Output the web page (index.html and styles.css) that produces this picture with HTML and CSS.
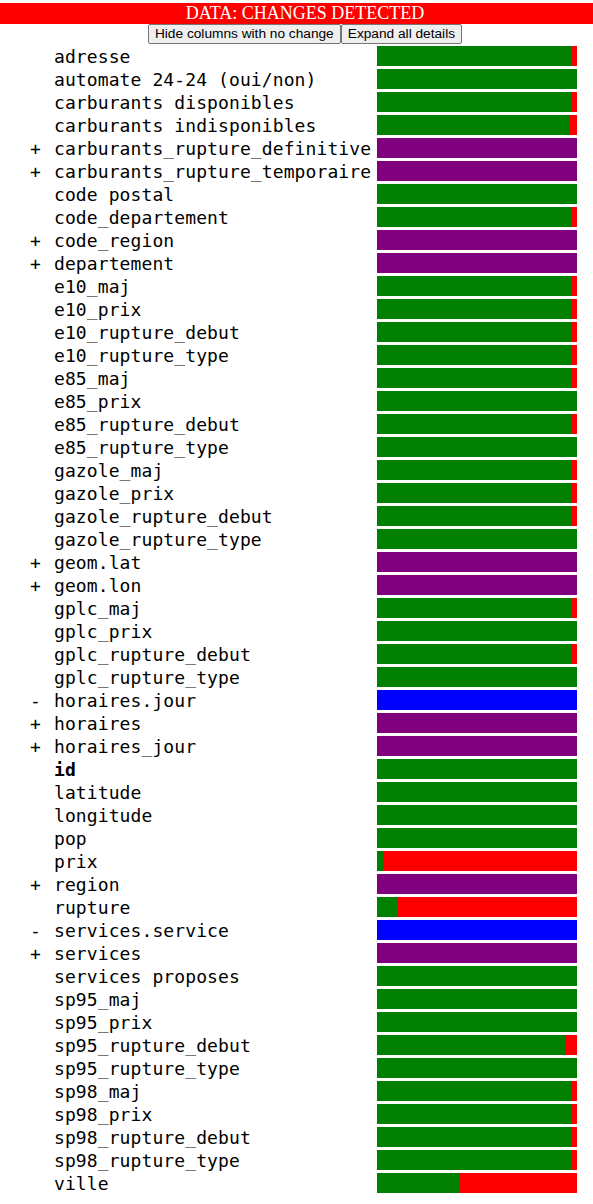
FILE: index.html
```html
<!DOCTYPE html>
<html>
<head>
<meta charset="utf-8">
<link rel="stylesheet" href="styles.css">
</head>
<body>
<div class="banner"><div class="banner-text">DATA: CHANGES DETECTED</div></div>
<div class="toolbar"><button class="btn">Hide columns with no change</button><button class="btn">Expand all details</button></div>
<div class="cols">
  <div class="row"><span class="mark"></span><span class="name">adresse</span><div class="bar"><i class="seg ok" style="width:195px"></i><i class="seg chg"></i></div></div>
  <div class="row"><span class="mark"></span><span class="name">automate 24-24 (oui/non)</span><div class="bar"><i class="seg ok fill"></i></div></div>
  <div class="row"><span class="mark"></span><span class="name">carburants disponibles</span><div class="bar"><i class="seg ok" style="width:195px"></i><i class="seg chg"></i></div></div>
  <div class="row"><span class="mark"></span><span class="name">carburants indisponibles</span><div class="bar"><i class="seg ok" style="width:192px"></i><i class="seg chg"></i></div></div>
  <div class="row"><span class="mark">+</span><span class="name">carburants_rupture_definitive</span><div class="bar"><i class="seg added fill"></i></div></div>
  <div class="row"><span class="mark">+</span><span class="name">carburants_rupture_temporaire</span><div class="bar"><i class="seg added fill"></i></div></div>
  <div class="row"><span class="mark"></span><span class="name">code postal</span><div class="bar"><i class="seg ok fill"></i></div></div>
  <div class="row"><span class="mark"></span><span class="name">code_departement</span><div class="bar"><i class="seg ok" style="width:195px"></i><i class="seg chg"></i></div></div>
  <div class="row"><span class="mark">+</span><span class="name">code_region</span><div class="bar"><i class="seg added fill"></i></div></div>
  <div class="row"><span class="mark">+</span><span class="name">departement</span><div class="bar"><i class="seg added fill"></i></div></div>
  <div class="row"><span class="mark"></span><span class="name">e10_maj</span><div class="bar"><i class="seg ok" style="width:195px"></i><i class="seg chg"></i></div></div>
  <div class="row"><span class="mark"></span><span class="name">e10_prix</span><div class="bar"><i class="seg ok" style="width:195px"></i><i class="seg chg"></i></div></div>
  <div class="row"><span class="mark"></span><span class="name">e10_rupture_debut</span><div class="bar"><i class="seg ok" style="width:195px"></i><i class="seg chg"></i></div></div>
  <div class="row"><span class="mark"></span><span class="name">e10_rupture_type</span><div class="bar"><i class="seg ok" style="width:195px"></i><i class="seg chg"></i></div></div>
  <div class="row"><span class="mark"></span><span class="name">e85_maj</span><div class="bar"><i class="seg ok" style="width:195px"></i><i class="seg chg"></i></div></div>
  <div class="row"><span class="mark"></span><span class="name">e85_prix</span><div class="bar"><i class="seg ok fill"></i></div></div>
  <div class="row"><span class="mark"></span><span class="name">e85_rupture_debut</span><div class="bar"><i class="seg ok" style="width:195px"></i><i class="seg chg"></i></div></div>
  <div class="row"><span class="mark"></span><span class="name">e85_rupture_type</span><div class="bar"><i class="seg ok fill"></i></div></div>
  <div class="row"><span class="mark"></span><span class="name">gazole_maj</span><div class="bar"><i class="seg ok" style="width:195px"></i><i class="seg chg"></i></div></div>
  <div class="row"><span class="mark"></span><span class="name">gazole_prix</span><div class="bar"><i class="seg ok" style="width:195px"></i><i class="seg chg"></i></div></div>
  <div class="row"><span class="mark"></span><span class="name">gazole_rupture_debut</span><div class="bar"><i class="seg ok" style="width:195px"></i><i class="seg chg"></i></div></div>
  <div class="row"><span class="mark"></span><span class="name">gazole_rupture_type</span><div class="bar"><i class="seg ok fill"></i></div></div>
  <div class="row"><span class="mark">+</span><span class="name">geom.lat</span><div class="bar"><i class="seg added fill"></i></div></div>
  <div class="row"><span class="mark">+</span><span class="name">geom.lon</span><div class="bar"><i class="seg added fill"></i></div></div>
  <div class="row"><span class="mark"></span><span class="name">gplc_maj</span><div class="bar"><i class="seg ok" style="width:195px"></i><i class="seg chg"></i></div></div>
  <div class="row"><span class="mark"></span><span class="name">gplc_prix</span><div class="bar"><i class="seg ok fill"></i></div></div>
  <div class="row"><span class="mark"></span><span class="name">gplc_rupture_debut</span><div class="bar"><i class="seg ok" style="width:195px"></i><i class="seg chg"></i></div></div>
  <div class="row"><span class="mark"></span><span class="name">gplc_rupture_type</span><div class="bar"><i class="seg ok fill"></i></div></div>
  <div class="row"><span class="mark">-</span><span class="name">horaires.jour</span><div class="bar"><i class="seg removed fill"></i></div></div>
  <div class="row"><span class="mark">+</span><span class="name">horaires</span><div class="bar"><i class="seg added fill"></i></div></div>
  <div class="row"><span class="mark">+</span><span class="name">horaires_jour</span><div class="bar"><i class="seg added fill"></i></div></div>
  <div class="row"><span class="mark"></span><span class="name key">id</span><div class="bar"><i class="seg ok fill"></i></div></div>
  <div class="row"><span class="mark"></span><span class="name">latitude</span><div class="bar"><i class="seg ok fill"></i></div></div>
  <div class="row"><span class="mark"></span><span class="name">longitude</span><div class="bar"><i class="seg ok fill"></i></div></div>
  <div class="row"><span class="mark"></span><span class="name">pop</span><div class="bar"><i class="seg ok fill"></i></div></div>
  <div class="row"><span class="mark"></span><span class="name">prix</span><div class="bar"><i class="seg ok" style="width:7px"></i><i class="seg chg"></i></div></div>
  <div class="row"><span class="mark">+</span><span class="name">region</span><div class="bar"><i class="seg added fill"></i></div></div>
  <div class="row"><span class="mark"></span><span class="name">rupture</span><div class="bar"><i class="seg ok" style="width:20px"></i><i class="seg chg"></i></div></div>
  <div class="row"><span class="mark">-</span><span class="name">services.service</span><div class="bar"><i class="seg removed fill"></i></div></div>
  <div class="row"><span class="mark">+</span><span class="name">services</span><div class="bar"><i class="seg added fill"></i></div></div>
  <div class="row"><span class="mark"></span><span class="name">services proposes</span><div class="bar"><i class="seg ok fill"></i></div></div>
  <div class="row"><span class="mark"></span><span class="name">sp95_maj</span><div class="bar"><i class="seg ok fill"></i></div></div>
  <div class="row"><span class="mark"></span><span class="name">sp95_prix</span><div class="bar"><i class="seg ok fill"></i></div></div>
  <div class="row"><span class="mark"></span><span class="name">sp95_rupture_debut</span><div class="bar"><i class="seg ok" style="width:188px"></i><i class="seg chg"></i></div></div>
  <div class="row"><span class="mark"></span><span class="name">sp95_rupture_type</span><div class="bar"><i class="seg ok fill"></i></div></div>
  <div class="row"><span class="mark"></span><span class="name">sp98_maj</span><div class="bar"><i class="seg ok" style="width:195px"></i><i class="seg chg"></i></div></div>
  <div class="row"><span class="mark"></span><span class="name">sp98_prix</span><div class="bar"><i class="seg ok" style="width:195px"></i><i class="seg chg"></i></div></div>
  <div class="row"><span class="mark"></span><span class="name">sp98_rupture_debut</span><div class="bar"><i class="seg ok" style="width:195px"></i><i class="seg chg"></i></div></div>
  <div class="row"><span class="mark"></span><span class="name">sp98_rupture_type</span><div class="bar"><i class="seg ok" style="width:195px"></i><i class="seg chg"></i></div></div>
  <div class="row"><span class="mark"></span><span class="name">ville</span><div class="bar"><i class="seg ok" style="width:82px"></i><i class="seg chg"></i></div></div>
</div>
</body>
</html>
```

FILE: styles.css
```css
html, body {
  margin: 0;
  padding: 0;
  background: #ffffff;
}

body {
  padding-top: 3px;
}

.banner {
  background: #ff0000;
  height: 21px;
}

.banner-text {
  padding-left: 17px;
  text-align: center;
  color: #ffffff;
  font-family: "Liberation Serif", serif;
  font-size: 18px;
  line-height: 21px;
}

.toolbar {
  padding-left: 17px;
  display: flex;
  justify-content: center;
}

.btn {
  font-family: "Liberation Sans", Arial, sans-serif;
  font-size: 13.7px;
  line-height: 16px;
  color: #000000;
  background: #efefef;
  border: 1px solid #767676;
  border-radius: 2px;
  padding: 1px 6px;
  margin: 0;
}

.cols {
  display: flex;
  flex-direction: column;
  gap: 2px;
  padding-left: 30px;
  margin-top: 2px;
}

.row {
  display: grid;
  grid-template-columns: 24px 323px 200px;
  align-items: start;
  font-family: "DejaVu Sans Mono", monospace;
  font-size: 18px;
  line-height: 21px;
  letter-spacing: 0.1px;
  color: #000000;
  white-space: pre;
}

.name.key {
  font-weight: bold;
}

.bar {
  display: flex;
  height: 20px;
  width: 200px;
}

.seg {
  display: block;
  height: 20px;
}

.seg.fill,
.seg.chg {
  flex: 1;
}

.ok { background: #008000; }
.chg { background: #ff0000; }
.added { background: #800080; }
.removed { background: #0000ff; }
```
